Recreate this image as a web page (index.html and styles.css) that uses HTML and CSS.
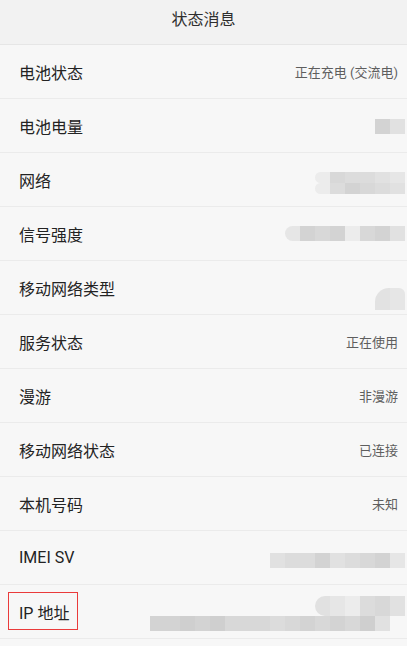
FILE: index.html
```html
<!DOCTYPE html>
<html lang="zh-CN">
<head>
<meta charset="utf-8">
<title>状态消息</title>
<link rel="stylesheet" href="styles.css">
</head>
<body>
<header class="topbar">状态消息</header>
<ul class="list">
  <li class="row"><span class="label">电池状态</span><span class="value">正在充电 (交流电)</span></li>
  <li class="row"><span class="label">电池电量</span>
    <span class="blur b-level"><i class="c g3"></i><i class="c g6"></i></span></li>
  <li class="row"><span class="label">网络</span>
    <span class="blur b-net">
      <span class="br"><i class="c g8 rl"></i><i class="c g4"></i><i class="c g5"></i><i class="c g5"></i><i class="c g6"></i><i class="c g7"></i></span>
      <span class="br"><i class="c g8 rl"></i><i class="c g5"></i><i class="c g3"></i><i class="c g4"></i><i class="c g5"></i><i class="c g6"></i></span>
    </span></li>
  <li class="row"><span class="label">信号强度</span>
    <span class="blur b-sig"><i class="c g7 rl"></i><i class="c g3"></i><i class="c g4"></i><i class="c g3"></i><i class="c g8"></i><i class="c g4"></i><i class="c g3"></i><i class="c g6"></i></span></li>
  <li class="row"><span class="label">移动网络类型</span>
    <span class="blur b-type"><i class="c g6 blob"></i></span></li>
  <li class="row"><span class="label">服务状态</span><span class="value">正在使用</span></li>
  <li class="row"><span class="label">漫游</span><span class="value">非漫游</span></li>
  <li class="row"><span class="label">移动网络状态</span><span class="value">已连接</span></li>
  <li class="row"><span class="label">本机号码</span><span class="value">未知</span></li>
  <li class="row"><span class="label">IMEI SV</span>
    <span class="blur b-imei"><i class="c g6"></i><i class="c g5"></i><i class="c g5"></i><i class="c g3"></i><i class="c g6"></i><i class="c g5"></i><i class="c g4"></i><i class="c g3"></i><i class="c g7"></i></span></li>
  <li class="row"><span class="label boxed">IP 地址</span>
    <span class="blur b-ip">
      <span class="br"><i class="c g6 rl"></i><i class="c g7"></i><i class="c g8"></i><i class="c g5"></i><i class="c g4"></i><i class="c g6"></i></span>
      <span class="br"><i class="c g3"></i><i class="c g3"></i><i class="c g2"></i><i class="c g3"></i><i class="c g2"></i><i class="c g4"></i><i class="c g4"></i><i class="c g4"></i><i class="c g5"></i><i class="c g4"></i><i class="c g3"></i><i class="c g4"></i><i class="c g3"></i><i class="c g4"></i><i class="c g2"></i><i class="c g6"></i></span>
    </span></li>
</ul>
</body>
</html>
```

FILE: styles.css
```css
html, body {
  margin: 0;
  padding: 0;
}
body {
  background: #f7f7f7;
  font-family: Roboto, "Noto Sans CJK SC", "Noto Sans", sans-serif;
  width: 407px;
  height: 646px;
  overflow: hidden;
}
.topbar {
  height: 45px;
  box-sizing: border-box;
  background: #f2f2f2;
  border-bottom: 1px solid #e6e6e6;
  display: flex;
  align-items: center;
  justify-content: center;
  font-size: 16px;
  color: #2e2e2e;
  padding-bottom: 9px;
}
.list {
  list-style: none;
  margin: 0;
  padding: 0;
}
.row {
  height: 53px;
  border-bottom: 1px solid #ebebeb;
  display: flex;
  align-items: center;
  justify-content: space-between;
  padding: 0 9px 0 19px;
}
.label {
  font-size: 16px;
  color: #232323;
  position: relative;
}
.value {
  font-size: 13px;
  color: #5e5e5e;
}
.boxed::after {
  content: "";
  position: absolute;
  left: -11px;
  right: -9px;
  top: -8px;
  bottom: -6px;
  border: 1px solid #ea3b3b;
}
.blur {
  display: flex;
  margin-right: -7px;
}
.br {
  display: flex;
  justify-content: flex-end;
}
.c {
  display: block;
  width: 15px;
  height: 15px;
}
.g2 { background: #cfcfcf; }
.g3 { background: #d3d3d3; }
.g4 { background: #d8d8d8; }
.g5 { background: #dcdcdc; }
.g6 { background: #e1e1e1; }
.g7 { background: #e6e6e6; }
.g8 { background: #ececec; }
.rl { border-radius: 10px 0 0 10px; }
.b-level { margin-top: 2px; }
.b-net { flex-direction: column; margin-top: 6px; }
.b-net .c { height: 11px; }
.b-sig { margin-top: 0; }
.b-type { margin-top: 22px; }
.b-type .blob {
  width: 30px;
  height: 22px;
  border-radius: 14px 6px 0 0;
  background: linear-gradient(90deg, #e2e2e2 50%, #e6e6e6 50%);
}
.b-imei { margin-top: 6px; }
.b-ip {
  flex-direction: column;
  align-items: flex-end;
  margin-top: 4px;
}
.b-ip .br:first-child .c { height: 20px; }
.b-ip .br:last-child { margin-right: 15px; }
```
